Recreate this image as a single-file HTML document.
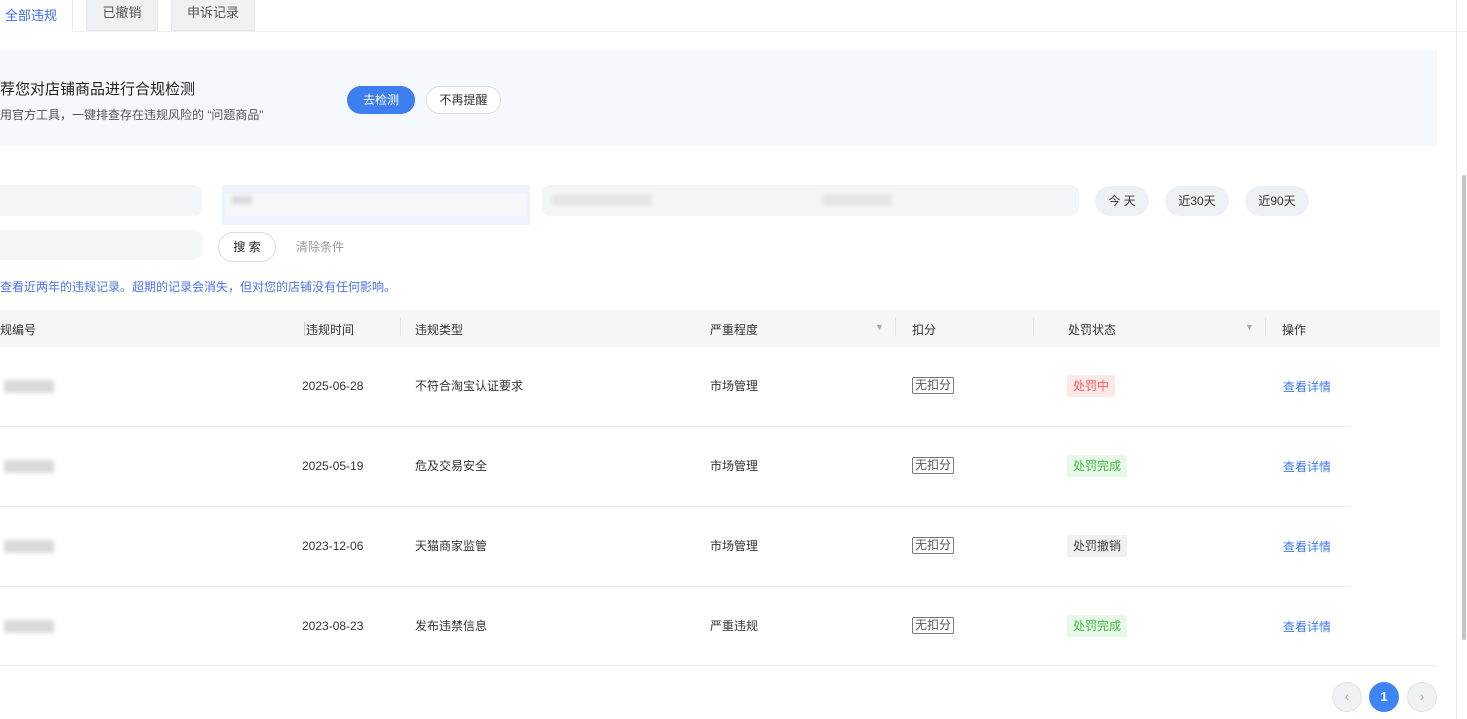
<!DOCTYPE html>
<html><head><meta charset="utf-8"><style>
*{margin:0;padding:0;box-sizing:border-box}
body{width:1467px;height:719px;overflow:hidden;background:#fff;font-family:"Liberation Sans","Noto Sans CJK SC",sans-serif;color:#333;position:relative;font-size:12px}
.a{position:absolute;white-space:nowrap}
.tab{position:absolute;top:0;height:31px;background:#eef0f4;border:1px solid #e6e8ee;border-top:none;color:#555;font-size:13px;line-height:26px;text-align:center}
.pill{position:absolute;top:186px;height:30px;border-radius:15px;background:#edf1f6;color:#333;font-size:12px;line-height:30px;text-align:center}
.line{position:absolute;left:0;width:1437px;height:1px;background:#ececef}
.cell{position:absolute;font-size:12px;color:#333;line-height:16px}
.tag{position:absolute;border:1px solid #777;border-radius:2px;font-size:12px;padding:0 2px;line-height:15px;color:#555}
.st{position:absolute;font-size:12px;padding:0 6px;line-height:22px;border-radius:2px}
.lk{position:absolute;color:#3a7af0;font-size:12px}
.blur{position:absolute;background:#d9d9d9;filter:blur(2px)}
.th{position:absolute;top:321px;font-size:12px;color:#333}
.sep{position:absolute;top:318px;width:1px;height:18px;background:#e2e4e8}
</style></head><body>
<div class="a" style="left:5px;top:5px;color:#3a6cf0;font-size:13px">全部违规</div>
<div style="position:absolute;left:72px;top:0;width:1px;height:31px;background:#e6e8ee"></div>
<div class="tab" style="left:86px;width:72px">已撤销</div>
<div class="tab" style="left:171px;width:84px">申诉记录</div>
<div style="position:absolute;left:72px;top:31px;width:1395px;height:1px;background:#eef0f3"></div>

<div style="position:absolute;left:0;top:50px;width:1437px;height:96px;background:#f5f8fd"></div>
<div class="a" style="left:0;top:78px;font-size:15px;color:#222">荐您对店铺商品进行合规检测</div>
<div class="a" style="left:0;top:106px;font-size:12px;color:#555">用官方工具，一键排查存在违规风险的 “问题商品”</div>
<div class="a" style="left:347px;top:86px;width:68px;height:28px;border-radius:14px;background:#3d7ff0;color:#fff;text-align:center;line-height:28px;font-size:12px">去检测</div>
<div class="a" style="left:426px;top:86px;width:75px;height:28px;border-radius:14px;background:#fff;border:1px solid #ddd;text-align:center;line-height:26px;font-size:12px;color:#333">不再提醒</div>

<div style="position:absolute;left:0;top:185px;width:202px;height:31px;background:#f5f6f8;border-radius:0 8px 8px 0"></div>
<div style="position:absolute;left:222px;top:185px;width:308px;height:40px;background:#eef3fd"></div>
<div style="position:absolute;left:226px;top:194px;width:300px;height:22px;background:#f6f7f9"></div>
<div class="blur" style="left:232px;top:196px;width:20px;height:8px"></div>
<div style="position:absolute;left:542px;top:185px;width:537px;height:31px;background:#f4f5f7;border-radius:8px"></div>
<div class="blur" style="left:552px;top:195px;width:100px;height:10px;background:#e3e3e3"></div>
<div class="blur" style="left:822px;top:195px;width:70px;height:10px;background:#e3e3e3"></div>
<div class="pill" style="left:1095px;width:54px">今 天</div>
<div class="pill" style="left:1165px;width:64px">近30天</div>
<div class="pill" style="left:1245px;width:64px">近90天</div>

<div style="position:absolute;left:0;top:230px;width:203px;height:30px;background:#f5f6f8;border-radius:0 10px 10px 0"></div>
<div class="a" style="left:218px;top:232px;width:58px;height:30px;border-radius:15px;border:1px solid #ddd;text-align:center;line-height:28px;font-size:12px;color:#222">搜 索</div>
<div class="a" style="left:296px;top:238px;font-size:12px;color:#999">清除条件</div>
<div class="a" style="left:0;top:278px;font-size:12px;color:#4a74e8">查看近两年的违规记录。超期的记录会消失，但对您的店铺没有任何影响。</div>

<div style="position:absolute;left:0;top:310px;width:1440px;height:37px;background:#f5f6f8"></div>
<div class="th" style="left:0">规编号</div>
<div class="sep" style="left:304px;background:#ccc;top:322px;height:14px"></div>
<div class="th" style="left:306px">违规时间</div>
<div class="sep" style="left:400px"></div>
<div class="th" style="left:415px">违规类型</div>
<div class="th" style="left:710px">严重程度</div>
<div class="a" style="left:875px;top:322px;color:#aaa;font-size:9px">▼</div>
<div class="sep" style="left:895px"></div>
<div class="th" style="left:912px">扣分</div>
<div class="sep" style="left:1033px"></div>
<div class="th" style="left:1068px">处罚状态</div>
<div class="a" style="left:1245px;top:322px;color:#aaa;font-size:9px">▼</div>
<div class="sep" style="left:1265px"></div>
<div class="th" style="left:1282px">操作</div>

<div class="line" style="top:426px;width:1350px"></div>
<div class="line" style="top:506px;width:1350px"></div>
<div class="line" style="top:586px;width:1350px"></div>
<div class="line" style="top:665px"></div>

<div class="blur" style="left:4px;top:380px;width:50px;height:13px"></div>
<div class="cell" style="left:302px;top:378px">2025-06-28</div>
<div class="cell" style="left:415px;top:378px">不符合淘宝认证要求</div>
<div class="cell" style="left:710px;top:378px">市场管理</div>
<div class="tag" style="left:912px;top:377px">无扣分</div>
<div class="st" style="left:1067px;top:375px;background:#fde8e8;color:#f25a5a">处罚中</div>
<div class="lk" style="left:1283px;top:378px">查看详情</div>

<div class="blur" style="left:4px;top:460px;width:50px;height:13px"></div>
<div class="cell" style="left:302px;top:458px">2025-05-19</div>
<div class="cell" style="left:415px;top:458px">危及交易安全</div>
<div class="cell" style="left:710px;top:458px">市场管理</div>
<div class="tag" style="left:912px;top:457px">无扣分</div>
<div class="st" style="left:1067px;top:455px;background:#e8f8e8;color:#3cb83c">处罚完成</div>
<div class="lk" style="left:1283px;top:458px">查看详情</div>

<div class="blur" style="left:4px;top:540px;width:50px;height:13px"></div>
<div class="cell" style="left:302px;top:538px">2023-12-06</div>
<div class="cell" style="left:415px;top:538px">天猫商家监管</div>
<div class="cell" style="left:710px;top:538px">市场管理</div>
<div class="tag" style="left:912px;top:537px">无扣分</div>
<div class="st" style="left:1067px;top:535px;background:#f0f0f0;color:#444">处罚撤销</div>
<div class="lk" style="left:1283px;top:538px">查看详情</div>

<div class="blur" style="left:4px;top:620px;width:50px;height:13px"></div>
<div class="cell" style="left:302px;top:618px">2023-08-23</div>
<div class="cell" style="left:415px;top:618px">发布违禁信息</div>
<div class="cell" style="left:710px;top:618px">严重违规</div>
<div class="tag" style="left:912px;top:617px">无扣分</div>
<div class="st" style="left:1067px;top:615px;background:#e8f8e8;color:#3cb83c">处罚完成</div>
<div class="lk" style="left:1283px;top:618px">查看详情</div>

<div class="a" style="left:1332px;top:682px;width:30px;height:30px;border-radius:15px;background:#f0f1f3;border:1px solid #e3e3e3;color:#aaa;text-align:center;line-height:27px;font-size:14px">‹</div>
<div class="a" style="left:1369px;top:682px;width:30px;height:30px;border-radius:15px;background:#3d85f5;color:#fff;text-align:center;line-height:30px;font-size:13px;font-weight:bold">1</div>
<div class="a" style="left:1407px;top:682px;width:30px;height:30px;border-radius:15px;background:#f0f1f3;border:1px solid #e3e3e3;color:#aaa;text-align:center;line-height:27px;font-size:14px">›</div>

<div style="position:absolute;left:1456px;top:0;width:1px;height:719px;background:#ececec"></div>
<div style="position:absolute;left:1462px;top:175px;width:4px;height:465px;background:#c4c4c4;border-radius:2px"></div>
</body></html>
